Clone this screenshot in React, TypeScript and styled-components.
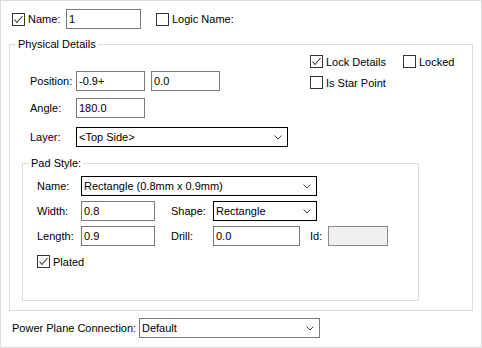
import React from 'react';
import styled, { createGlobalStyle } from 'styled-components';

const GlobalStyle = createGlobalStyle`
  html, body {
    margin: 0;
    padding: 0;
    background: #fff;
  }
  * {
    box-sizing: border-box;
  }
`;

const Dialog = styled.div`
  width: 482px;
  height: 348px;
  border: 1px solid #dcdcdc;
  background: #fff;
  font-family: 'Liberation Sans', Arial, sans-serif;
  font-size: 11px;
  color: #000;
  display: flex;
  flex-direction: column;
`;

const Row = styled.div<{ top?: number; left?: number }>`
  display: flex;
  align-items: center;
  height: 20px;
  margin-top: ${p => p.top || 0}px;
  padding-left: ${p => p.left || 0}px;
`;

const Label = styled.span<{ w?: number; gap?: number }>`
  display: inline-block;
  width: ${p => (p.w ? `${p.w}px` : 'auto')};
  margin-left: ${p => p.gap || 0}px;
  flex-shrink: 0;
  white-space: nowrap;
`;

const CheckWrap = styled.label<{ w?: number; gap?: number }>`
  display: flex;
  align-items: center;
  gap: 3px;
  width: ${p => (p.w ? `${p.w}px` : 'auto')};
  margin-left: ${p => p.gap || 0}px;
  height: 13px;
  white-space: nowrap;
  flex-shrink: 0;
`;

const Box = styled.span`
  width: 13px;
  height: 13px;
  border: 1px solid #333;
  background: #fff;
  display: flex;
  align-items: center;
  justify-content: center;
  flex-shrink: 0;
`;

const TextBox = styled.div<{ w: number; gap?: number; disabled?: boolean }>`
  width: ${p => p.w}px;
  height: 20px;
  margin-left: ${p => p.gap || 0}px;
  border: 1px solid ${p => (p.disabled ? '#8a8a8a' : '#7a7a7a')};
  background: ${p => (p.disabled ? '#f0f0f0' : '#fff')};
  padding-left: 2px;
  display: flex;
  align-items: center;
  flex-shrink: 0;
`;

const Combo = styled.div<{ w: number; gap?: number; dark?: boolean }>`
  width: ${p => p.w}px;
  height: 20px;
  margin-left: ${p => p.gap || 0}px;
  border: 1px solid ${p => (p.dark ? '#000' : '#7a7a7a')};
  background: #fff;
  padding: 0 5px 0 2px;
  display: flex;
  align-items: center;
  justify-content: space-between;
  flex-shrink: 0;
`;

const Group = styled.div<{ top: number; left: number; w: number; h: number }>`
  position: relative;
  margin-top: ${p => p.top}px;
  margin-left: ${p => p.left}px;
  width: ${p => p.w}px;
  height: ${p => p.h}px;
  border: 1px solid #dcdcdc;
  flex-shrink: 0;
`;

const GroupTitle = styled.span`
  position: absolute;
  top: -7px;
  left: 6px;
  padding: 0 2px;
  line-height: 13px;
  background: #fff;
  white-space: nowrap;
`;

const TopSection = styled.div`
  display: flex;
`;

const FieldColumn = styled.div`
  width: 290px;
  padding: 26px 0 0 20px;
  display: flex;
  flex-direction: column;
`;

const CheckColumn = styled.div`
  padding: 10px 0 0 10px;
  display: flex;
  flex-direction: column;
  gap: 8px;
`;

const CheckRow = styled.div`
  display: flex;
  align-items: center;
`;

const PadBody = styled.div`
  padding: 12px 0 0 14px;
  display: flex;
  flex-direction: column;
`;

const Check = ({ label, checked, w, gap }: { label: string; checked?: boolean; w?: number; gap?: number }) => (
  <CheckWrap w={w} gap={gap}>
    <Box>
      {checked && (
        <svg width="11" height="11" viewBox="0 0 11 11">
          <path d="M1.5 5.5 L4 8.5 L9.5 2" fill="none" stroke="#333" strokeWidth="1.1" />
        </svg>
      )}
    </Box>
    {label}
  </CheckWrap>
);

const Chevron = () => (
  <svg width="8" height="5" viewBox="0 0 8 5">
    <path d="M0.5 0.5 L4 4 L7.5 0.5" fill="none" stroke="#444" strokeWidth="1" />
  </svg>
);

const Select = ({ value, w, gap, dark }: { value: string; w: number; gap?: number; dark?: boolean }) => (
  <Combo w={w} gap={gap} dark={dark}>
    <span>{value}</span>
    <Chevron />
  </Combo>
);

export default function App() {
  return (
    <>
      <GlobalStyle />
      <Dialog>
        <Row top={8} left={11}>
          <Check label="Name:" checked w={54} />
          <TextBox w={75}>1</TextBox>
          <Check label="Logic Name:" gap={15} />
        </Row>

        <Group top={15} left={8} w={464} h={267}>
          <GroupTitle>Physical Details</GroupTitle>
          <TopSection>
            <FieldColumn>
              <Row>
                <Label w={46}>Position:</Label>
                <TextBox w={69}>-0.9+</TextBox>
                <TextBox w={69} gap={6}>0.0</TextBox>
              </Row>
              <Row top={7}>
                <Label w={46}>Angle:</Label>
                <TextBox w={69}>180.0</TextBox>
              </Row>
              <Row top={9}>
                <Label w={46}>Layer:</Label>
                <Select value="<Top Side>" w={212} dark />
              </Row>
            </FieldColumn>
            <CheckColumn>
              <CheckRow>
                <Check label="Lock Details" checked w={93} />
                <Check label="Locked" />
              </CheckRow>
              <CheckRow>
                <Check label="Is Star Point" />
              </CheckRow>
            </CheckColumn>
          </TopSection>

          <Group top={16} left={12} w={397} h={138}>
            <GroupTitle>Pad Style:</GroupTitle>
            <PadBody>
              <Row>
                <Label w={44}>Name:</Label>
                <Select value="Rectangle (0.8mm x 0.9mm)" w={236} dark />
              </Row>
              <Row top={5}>
                <Label w={44}>Width:</Label>
                <TextBox w={74}>0.8</TextBox>
                <Label w={42} gap={16}>Shape:</Label>
                <Select value="Rectangle" w={104} dark />
              </Row>
              <Row top={5}>
                <Label w={44}>Length:</Label>
                <TextBox w={74}>0.9</TextBox>
                <Label w={42} gap={16}>Drill:</Label>
                <TextBox w={87}>0.0</TextBox>
                <Label w={18} gap={10}>Id:</Label>
                <TextBox w={60} disabled />
              </Row>
              <Row top={9} style={{ height: 13 }}>
                <Check label="Plated" checked />
              </Row>
            </PadBody>
          </Group>
        </Group>

        <Row top={7} left={11}>
          <Label w={127}>Power Plane Connection:</Label>
          <Select value="Default" w={181} />
        </Row>
      </Dialog>
    </>
  );
}
